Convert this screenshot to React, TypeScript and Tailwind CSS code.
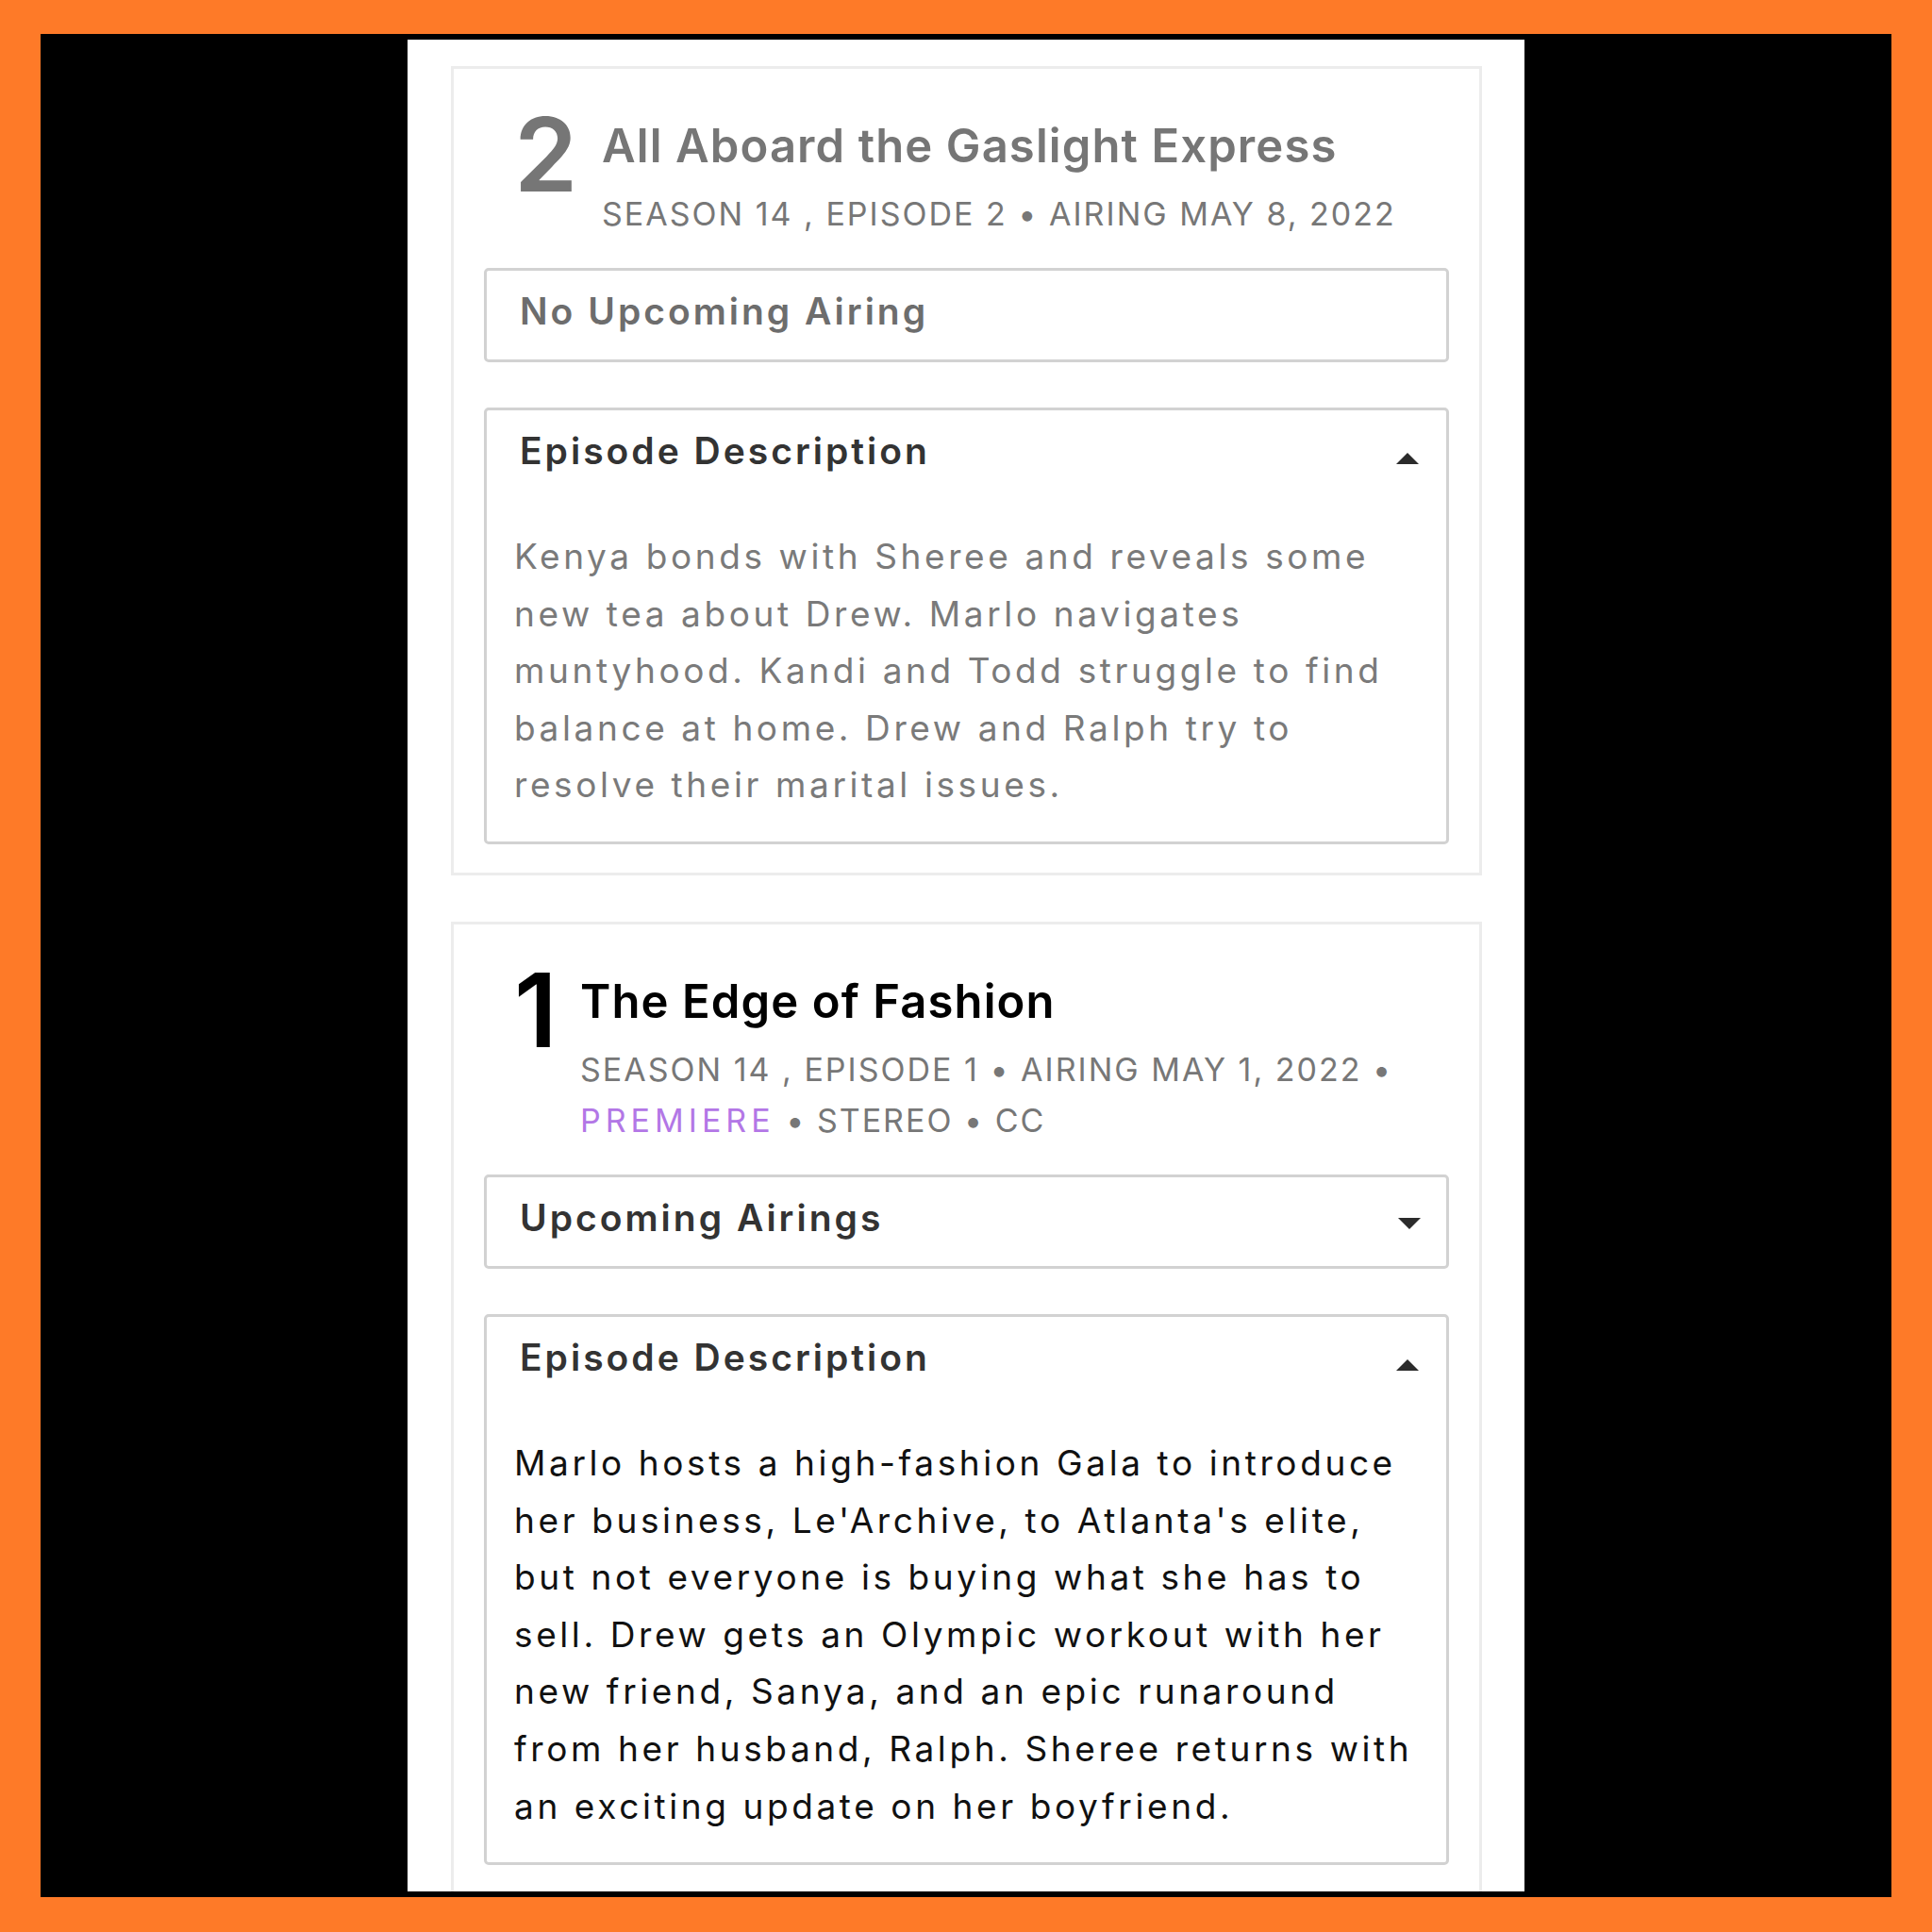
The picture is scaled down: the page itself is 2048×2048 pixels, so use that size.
import React from "react";

type Episode = {
  number: string;
  numberWidth: string;
  title: string;
  meta: React.ReactNode;
  airing: string;
  hasAirings: boolean;
  lines: string[];
  dimmed: boolean;
};

const episodes: Episode[] = [
  {
    number: "2",
    numberWidth: "w-[93px]",
    title: "All Aboard the Gaslight Express",
    meta: <>SEASON 14 , EPISODE 2 • AIRING MAY 8, 2022</>,
    airing: "No Upcoming Airing",
    hasAirings: false,
    dimmed: true,
    lines: [
      "Kenya bonds with Sheree and reveals some",
      "new tea about Drew. Marlo navigates",
      "muntyhood. Kandi and Todd struggle to find",
      "balance at home. Drew and Ralph try to",
      "resolve their marital issues.",
    ],
  },
  {
    number: "1",
    numberWidth: "w-[70px]",
    title: "The Edge of Fashion",
    meta: (
      <>
        SEASON 14 , EPISODE 1 • AIRING MAY 1, 2022 •
        <br />
        <span className="text-[#b377e6] tracking-[5px]">PREMIERE</span> • STEREO • CC
      </>
    ),
    airing: "Upcoming Airings",
    hasAirings: true,
    dimmed: false,
    lines: [
      "Marlo hosts a high-fashion Gala to introduce",
      "her business, Le'Archive, to Atlanta's elite,",
      "but not everyone is buying what she has to",
      "sell. Drew gets an Olympic workout with her",
      "new friend, Sanya, and an epic runaround",
      "from her husband, Ralph. Sheree returns with",
      "an exciting update on her boyfriend.",
    ],
  },
];

// small solid caret used by the collapsible boxes
const Caret = ({ up, className }: { up: boolean; className?: string }) => (
  <svg width="24" height="12" viewBox="0 0 24 12" className={className}>
    {up ? <path d="M12 0 L24 12 L0 12 Z" fill="#2b2b2b" /> : <path d="M0 0 L24 0 L12 12 Z" fill="#2b2b2b" />}
  </svg>
);

const EpisodeCard = ({ ep }: { ep: Episode }) => {
  const headColor = ep.dimmed ? "text-[#767676]" : "text-black";
  return (
    <div className="border-[3px] border-[#ececec] px-[32px] pt-[32px] pb-[30px]">
      <div className="flex items-start pl-[32px]">
        <div className={`${ep.numberWidth} shrink-0 mt-[5px] text-[108px] leading-none font-semibold ${headColor}`}>
          {ep.number}
        </div>
        <div className="mt-[25px]">
          <div className={`text-[49px] leading-none font-semibold tracking-[1.1px] ${headColor}`}>{ep.title}</div>
          <div className="mt-[21px] text-[34px] leading-[54px] tracking-[2px] text-[#777777] whitespace-pre">
            {ep.meta}
          </div>
        </div>
      </div>

      <div
        className={`mt-[30px] h-[100px] border-[3px] border-[#d2d2d2] rounded-[5px] pl-[35px] pr-[27px] pt-[23px] flex items-start justify-between ${
          ep.hasAirings ? "text-[#333333]" : "text-[#6d6d6d]"
        }`}
      >
        <span className="text-[39px] leading-none font-semibold tracking-[3px]">{ep.airing}</span>
        {ep.hasAirings && <Caret up={false} className="mt-[20px]" />}
      </div>

      <div className="mt-[48px] border-[3px] border-[#d2d2d2] rounded-[5px] pt-[23px] pb-[29px]">
        <div className="flex items-start justify-between pl-[35px] pr-[29px]">
          <span className="text-[39px] leading-none font-semibold tracking-[3px] text-[#333333]">
            Episode Description
          </span>
          <Caret up className="mt-[22px]" />
        </div>
        <div
          className={`mt-[63px] pl-[29px] text-[37px] leading-[60.6px] tracking-[3.6px] ${
            ep.dimmed ? "text-[#7a7a7a]" : "text-[#111111]"
          }`}
        >
          {ep.lines.map((l) => (
            <div key={l} className="whitespace-nowrap">
              {l}
            </div>
          ))}
        </div>
      </div>
    </div>
  );
};

export default function App() {
  return (
    <div className="w-[2048px] h-[2048px] bg-[#fe7a28] pt-[36px] pb-[37px] px-[43px] font-['Inter',sans-serif]">
      <div className="w-full h-full bg-black flex justify-center py-[6px]">
        <div className="w-[1184px] h-full bg-white overflow-hidden pl-[46px] pr-[45px] pt-[28px]">
          <div className="flex flex-col gap-[49px]">
            {episodes.map((ep) => (
              <EpisodeCard key={ep.number} ep={ep} />
            ))}
          </div>
        </div>
      </div>
    </div>
  );
}
